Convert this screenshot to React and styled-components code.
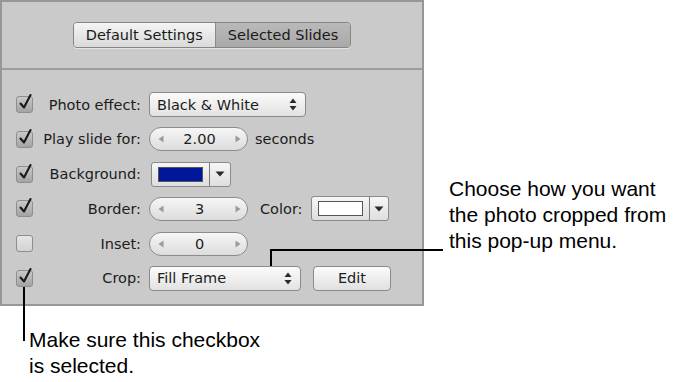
import React from "react";
import styled, { createGlobalStyle } from "styled-components";

const Global = createGlobalStyle`
  html, body { margin: 0; padding: 0; background: #ffffff; }
  body { font-family: "DejaVu Sans", sans-serif; }
`;

const Page = styled.div`
  position: relative;
  width: 680px;
  height: 382px;
  display: grid;
  grid-template-columns: 424px 1fr;
  grid-template-rows: 306px 1fr;
  overflow: hidden;
`;

const Panel = styled.div`
  box-sizing: border-box;
  width: 424px;
  height: 306px;
  background: #cacaca;
  border: 2px solid #979797;
  display: flex;
  flex-direction: column;
  font-family: "DejaVu Sans", sans-serif;
  font-size: 14.5px;
  color: #1c1c1c;
`;

const Header = styled.div`
  height: 66px;
  display: flex;
  align-items: center;
  justify-content: center;
  border-bottom: 2px solid #9c9c9c;
`;

const Segmented = styled.div`
  display: flex;
  height: 24px;
  border: 1px solid #858585;
  border-radius: 4px;
  overflow: hidden;
  box-shadow: 0 1px 0 rgba(255,255,255,0.5);
`;

const Segment = styled.div`
  display: flex;
  align-items: center;
  padding: 0 12px;
  line-height: 1;
  background: ${(p) =>
    p.$selected
      ? "linear-gradient(#b9b9b9, #a9a9a9)"
      : "linear-gradient(#f4f4f4, #dadada)"};
  border-left: ${(p) => (p.$first ? "none" : "1px solid #8a8a8a")};
  color: #1a1a1a;
`;

const Form = styled.div`
  display: grid;
  grid-template-columns: 17px 100px 1fr;
  grid-auto-rows: 25px;
  column-gap: 8px;
  row-gap: 9.8px;
  padding: 22px 0 0 14px;
  align-items: center;
`;

const Check = styled.div`
  box-sizing: border-box;
  width: 17px;
  height: 17px;
  border: 1px solid #8e8e8e;
  border-radius: 3px;
  background: ${(p) =>
    p.$checked
      ? "linear-gradient(#c9c9c9, #a4a4a4)"
      : "linear-gradient(#e6e6e6, #d2d2d2)"};
  display: flex;
  align-items: center;
  justify-content: center;
  position: relative;
`;

const Label = styled.div`
  text-align: right;
  white-space: nowrap;
`;

const Controls = styled.div`
  display: flex;
  align-items: center;
  gap: ${(p) => p.$gap || 8}px;
  white-space: nowrap;
`;

const Popup = styled.div`
  box-sizing: border-box;
  width: ${(p) => p.$w}px;
  height: 25px;
  border: 1px solid #8a8a8a;
  border-radius: 4px;
  background: linear-gradient(#fbfbfb, #e2e2e2);
  display: flex;
  align-items: center;
  justify-content: space-between;
  padding: 0 8px 0 7px;
`;

const Stepper = styled.div`
  box-sizing: border-box;
  width: 99px;
  height: 24px;
  border: 1px solid #8c8c8c;
  border-radius: 12px;
  background: linear-gradient(#f6f6f6, #dcdcdc);
  display: flex;
  align-items: center;
  justify-content: space-between;
  padding: 0 6px 0 8px;
`;

const StepValue = styled.span`
  flex: 1;
  text-align: center;
`;

const Well = styled.div`
  box-sizing: border-box;
  width: ${(p) => p.$w || 78}px;
  height: 25px;
  margin-left: ${(p) => p.$offset || 0}px;
  border: 1px solid #8a8a8a;
  border-radius: 3px;
  background: linear-gradient(#f6f6f6, #dedede);
  display: flex;
  align-items: center;
  padding-left: 6px;
`;

const Swatch = styled.div`
  box-sizing: border-box;
  width: 45px;
  height: 15px;
  border: 1px solid #555;
  background: ${(p) => p.$color};
`;

const WellArrow = styled.div`
  margin-left: 6px;
  height: 100%;
  flex: 1;
  border-left: 1px solid #7a7a7a;
  display: flex;
  align-items: center;
  justify-content: center;
`;

const Button = styled.div`
  box-sizing: border-box;
  width: 78px;
  height: 25px;
  border: 1px solid #8a8a8a;
  border-radius: 4px;
  background: linear-gradient(#fbfbfb, #e0e0e0);
  display: flex;
  align-items: center;
  justify-content: center;
`;

const Caption = styled.div`
  font-family: "Liberation Sans", Arial, sans-serif;
  font-size: 21px;
  line-height: 26px;
  color: #000;
`;

const RightCaption = styled(Caption)`
  padding: 176px 0 0 25px;
`;

const BottomCaption = styled(Caption)`
  grid-column: 1 / 3;
  padding: 21px 0 0 29px;
  line-height: 25.5px;
`;

const Leader = styled.div`
  position: absolute;
  background: #000;
  left: ${(p) => p.$x}px;
  top: ${(p) => p.$y}px;
  width: ${(p) => p.$w}px;
  height: ${(p) => p.$h}px;
`;

const CheckMark = () => (
  <svg width="15" height="17" viewBox="0 0 15 17" style={{ position: "absolute", left: 1, top: -4 }}>
    <path d="M2.5 10.5 L6 14.5 L12.5 2" fill="none" stroke="#1a1a1a" strokeWidth="2.1" strokeLinecap="round" strokeLinejoin="round" />
  </svg>
);

const UpDown = () => (
  <svg width="8" height="13" viewBox="0 0 8 13">
    <path d="M4 0.5 L7.5 5 L0.5 5 Z" fill="#2a2a2a" />
    <path d="M4 12.5 L7.5 8 L0.5 8 Z" fill="#2a2a2a" />
  </svg>
);

const Left = () => (
  <svg width="6" height="8" viewBox="0 0 6 8">
    <path d="M0.5 4 L5.5 0.5 L5.5 7.5 Z" fill="#9a9a9a" />
  </svg>
);
const Right = () => (
  <svg width="6" height="8" viewBox="0 0 6 8">
    <path d="M5.5 4 L0.5 0.5 L0.5 7.5 Z" fill="#9a9a9a" />
  </svg>
);
const Down = () => (
  <svg width="10" height="6" viewBox="0 0 10 6">
    <path d="M0.5 0.5 L9.5 0.5 L5 5.5 Z" fill="#2a2a2a" />
  </svg>
);

const Box = ({ checked }) => <Check $checked={checked}>{checked && <CheckMark />}</Check>;

export default function App() {
  return (
    <>
      <Global />
      <Page>
        <Panel>
          <Header>
            <Segmented>
              <Segment $first>Default Settings</Segment>
              <Segment $selected>Selected Slides</Segment>
            </Segmented>
          </Header>
          <Form>
            <Box checked />
            <Label>Photo effect:</Label>
            <Controls>
              <Popup $w={157}>
                <span>Black &amp; White</span>
                <UpDown />
              </Popup>
            </Controls>

            <Box checked />
            <Label>Play slide for:</Label>
            <Controls $gap={7}>
              <Stepper>
                <Left />
                <StepValue>2.00</StepValue>
                <Right />
              </Stepper>
              <span>seconds</span>
            </Controls>

            <Box checked />
            <Label>Background:</Label>
            <Controls>
              <Well $w={80} $offset={2}>
                <Swatch $color="#00179c" />
                <WellArrow>
                  <Down />
                </WellArrow>
              </Well>
            </Controls>

            <Box checked />
            <Label>Border:</Label>
            <Controls $gap={12}>
              <Stepper>
                <Left />
                <StepValue>3</StepValue>
                <Right />
              </Stepper>
              <span>Color:</span>
              <Well $w={78} $offset={-4}>
                <Swatch $color="#ffffff" />
                <WellArrow>
                  <Down />
                </WellArrow>
              </Well>
            </Controls>

            <Box />
            <Label>Inset:</Label>
            <Controls>
              <Stepper>
                <Left />
                <StepValue>0</StepValue>
                <Right />
              </Stepper>
            </Controls>

            <Box checked />
            <Label>Crop:</Label>
            <Controls $gap={12}>
              <Popup $w={152}>
                <span>Fill Frame</span>
                <UpDown />
              </Popup>
              <Button>Edit</Button>
            </Controls>
          </Form>
        </Panel>
        <RightCaption>
          Choose how you want
          <br />
          the photo cropped from
          <br />
          this pop-up menu.
        </RightCaption>
        <BottomCaption>
          Make sure this checkbox
          <br />
          is selected.
        </BottomCaption>
        <Leader $x={270} $y={249} $w={2} $h={17} />
        <Leader $x={270} $y={249} $w={173} $h={2} />
        <Leader $x={23} $y={287} $w={2} $h={54} />
      </Page>
    </>
  );
}
